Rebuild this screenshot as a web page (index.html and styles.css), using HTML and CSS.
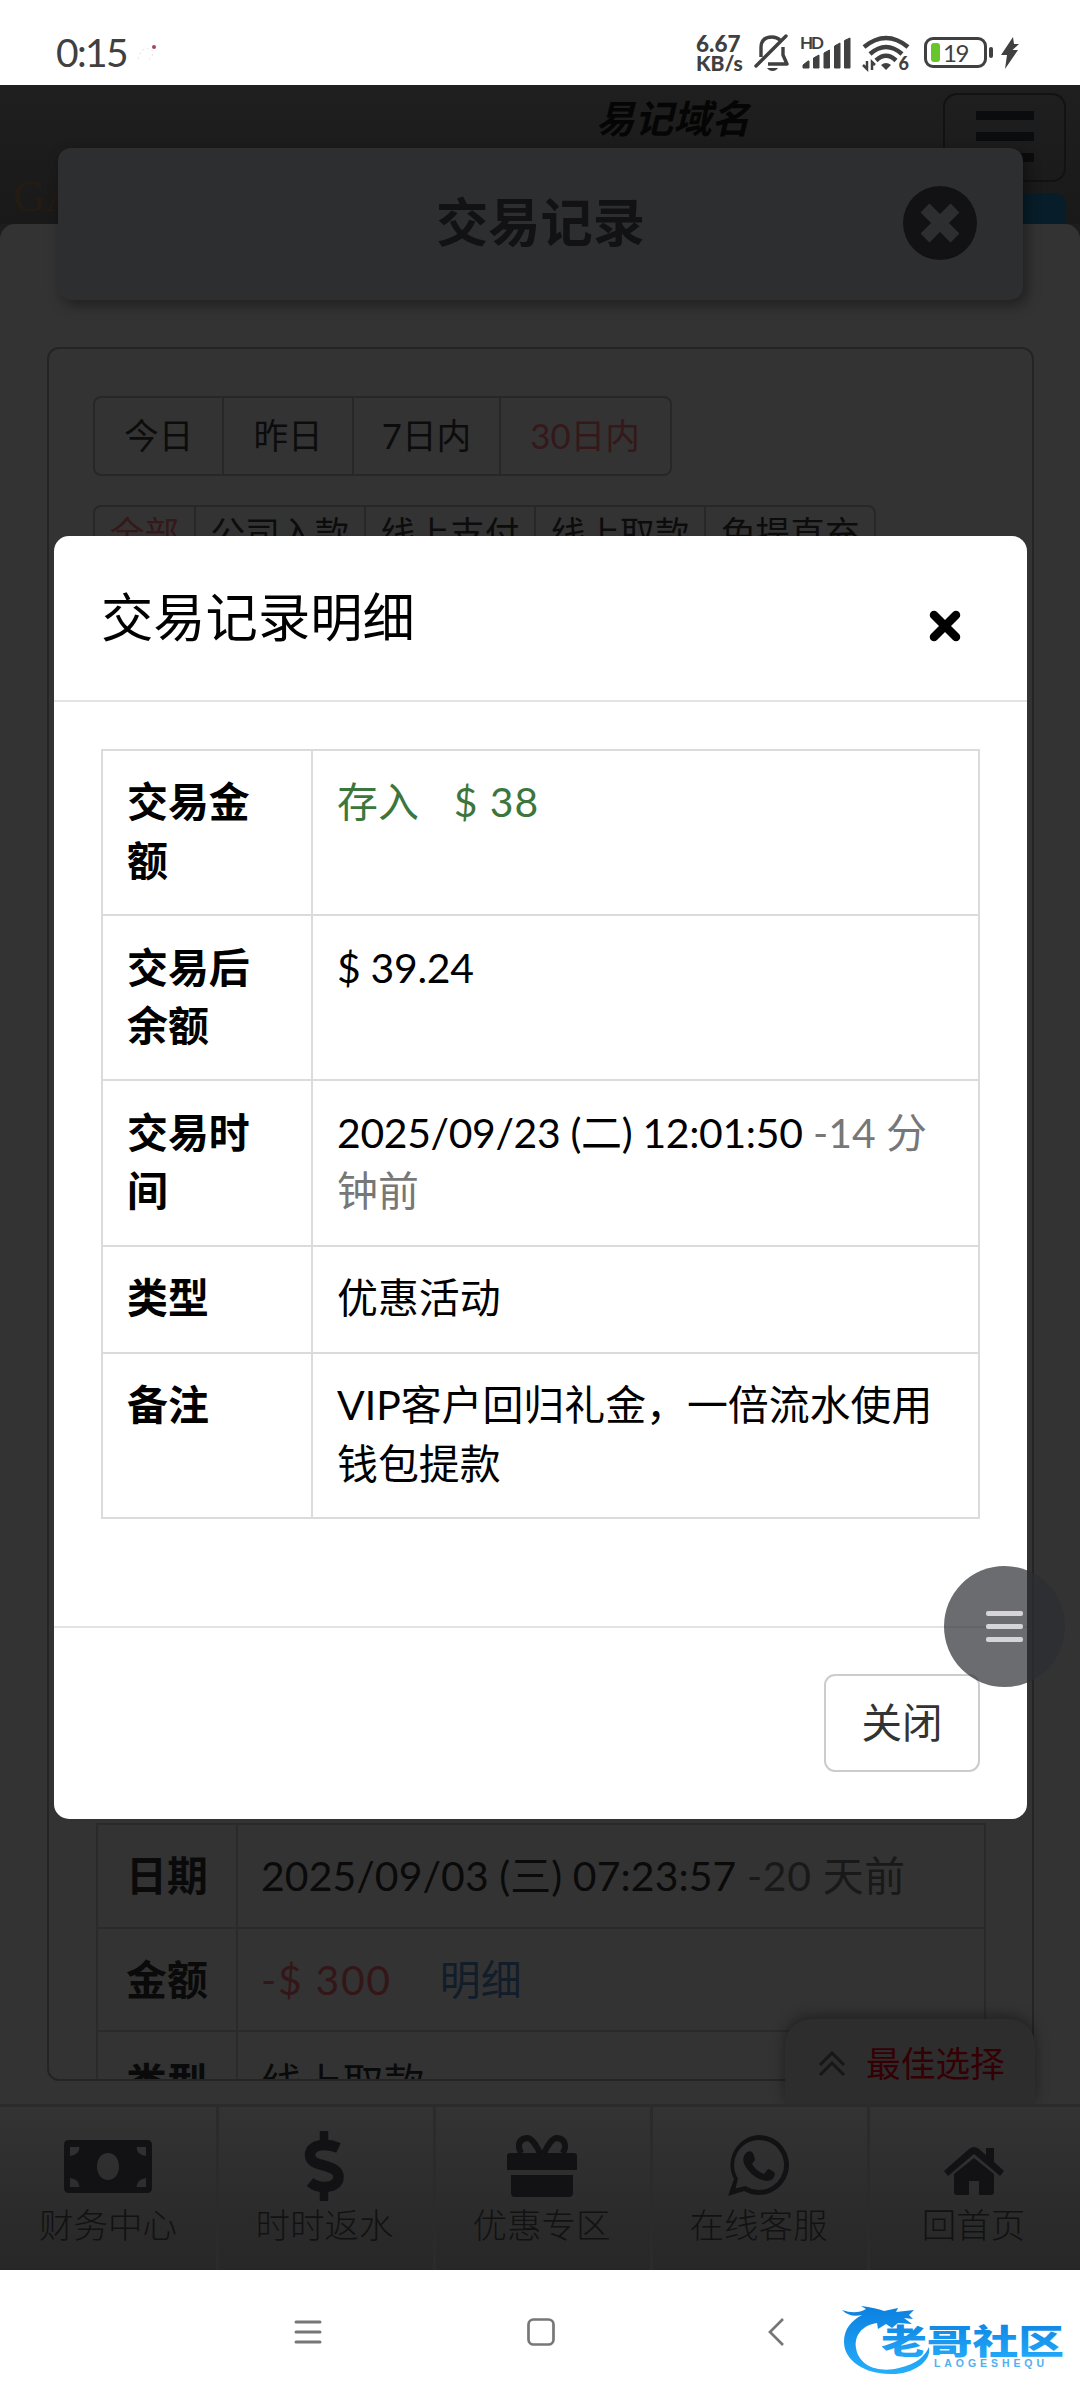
FILE: index.html
```html
<!DOCTYPE html>
<html lang="zh-CN">
<head>
<meta charset="utf-8">
<title>交易记录</title>
<link rel="stylesheet" href="styles.css">
</head>
<body>
<div class="phone">
  <div class="status">
    <span class="clock">0:15</span>
    <svg class="notice" width="26" height="26" viewBox="0 0 26 26"><path d="M2 18l3-8 6-3 6 3-1 6-5 4" fill="none" stroke="#e4e4e4" stroke-width="1" stroke-dasharray="2 3"/><circle cx="18" cy="6" r="2" fill="#a4475a"/></svg>
    <div class="status-right">
      <div class="speed"><b>6.67</b><b class="unit">KB/s</b></div>
      <svg class="bell" width="36" height="40" viewBox="0 0 36 40" fill="none" stroke="#404040" stroke-width="3.4"><path d="M7 24V14.500Q7 4 18 4Q23 4 26 7M29 14V22L33 31H14" stroke-linejoin="round"/><path d="M2 33L32 3" stroke-linecap="round"/><path d="M13 35h11q-2 3-5.500 3T13 35z" fill="#404040" stroke="none"/></svg>
      <svg class="signal" width="54" height="36" viewBox="0 0 54 36" fill="#404040"><text x="1" y="13" font-size="17" font-weight="700" textLength="24">HD</text><path d="M4 32v-3l5-4h1v7zM14.500 32V22l5.500-3v13zM25 32V17l5.500-3v18zM35.500 32V10l5.500-3v25zM45.500 32V4.500l5.500-2.500v30z" stroke="#404040" stroke-width="1" stroke-linejoin="round"/></svg>
      <svg class="wifi" width="48" height="38" viewBox="0 0 48 38" fill="none" stroke="#404040" stroke-width="4.500"><path d="M2 12Q24-6 46 12M8 19Q24 5 40 19M14 25.500Q24 16 34 25.500"/><path d="M19 30q5-4 10 0l-5 5z" fill="#404040" stroke="none"/><path d="M5 26v8l-4-4M10 35v-8l3 3" stroke-width="2.500"/><text x="36.500" y="35" font-size="18" font-weight="900" fill="#404040" stroke="none">6</text></svg>
      <div class="battery"><i class="charge"></i><span>19</span></div>
      <i class="battery-cap"></i>
      <svg class="bolt" width="20" height="32" viewBox="0 0 20 32"><path d="M13 0L1 18h6L5 32 18 13h-5.500L19 7h-5z" fill="#404040"/></svg>
    </div>
  </div>

  <div class="app">
    <header class="site-header">
      <span class="brand">G<small>A</small></span>
      <span class="domain">易记域名</span>
      <div class="menu-btn"><i></i><i></i><i></i></div>
      <div class="blue-tab"></div>
    </header>
    <main class="page">
      <section class="records">
        <div class="filters days"><span>今日</span><span>昨日</span><span>7日内</span><span class="on">30日内</span></div>
        <div class="filters kinds"><span class="on">全部</span><span>公司入款</span><span>线上支付</span><span>线上取款</span><span>免提直充</span></div>
        <table class="list">
          <tr><th>日期</th><td><span class="date">2025/09/03 (三) 07:23:57</span> <span class="ago">-20 天前</span></td></tr>
          <tr><th>金额</th><td><span class="minus">-$ 300</span><span class="link">明细</span></td></tr>
          <tr><th>类型</th><td>线上取款</td></tr>
        </table>
      </section>
    </main>
    <nav class="tabs">
      <a><svg width="88" height="53" viewBox="0 0 88 53"><path fill-rule="evenodd" d="M5 0H83Q88 0 88 5V48Q88 53 83 53H5Q0 53 0 48V5Q0 0 5 0zM44 13C37.500 13 33 18.500 33 26.500S37.500 40 44 40S55 34.500 55 26.500S50.500 13 44 13zM6 7V16Q15 15 15.500 7zM82 7V16Q73 15 72.500 7zM6 47V38Q15 39 15.500 47zM82 47V38Q73 39 72.500 47z"/></svg><span>财务中心</span></a>
      <a><svg width="42" height="72" viewBox="0 0 42 72"><g fill="none" stroke="#121214" stroke-width="10.500"><path d="M34.500 18Q28 15 21 15C11 15 6 19 6 25C6 32 13 33.500 20 35.500C28 38 34.500 40 34.500 47C34.500 54 28 57 20 57Q12 57 6 52"/><path d="M20 1V14M20 58V71" stroke-width="8.500"/></g></svg><span>时时返水</span></a>
      <a><svg width="72" height="62" viewBox="0 0 72 62"><path d="M4 18H68Q71 18 71 21V35H1V21Q1 18 4 18zM5 40H31V62H9Q5 62 5 58zM41 40H67V58Q67 62 63 62H41zM31 40H41V62H31z"/><path d="M34 18C30 10 26 3 21 3Q12 4 13 13L15 18M38 18C42 10 46 3 51 3Q60 4 59 13L57 18" fill="none" stroke="#121214" stroke-width="6"/></svg><span>优惠专区</span></a>
      <a><svg width="62" height="62" viewBox="0 0 62 62"><path fill-rule="evenodd" d="M31 0A30 30 0 1 1 16 56L0 61L6 44A30 30 0 0 1 31 0zM31 5A25 25 0 0 0 10 43.500L7.500 53.500L17.500 51A25 25 0 1 0 31 5z"/><path d="M19 17q4-2 6 1l2 6q0 2-3 5q4 7 12 10l4-5q2 0 7 4q0 7-8 8q-11-1-19-11q-9-11-1-18z"/></svg><span>在线客服</span></a>
      <a><svg width="62" height="50" viewBox="0 0 62 50"><path d="M26 3Q31-1 36 3L43 9V2H51V16L61 25L57 30L31 8L5 30L1 25zM11 28L31 12L51 28V46Q51 49 48 49H36V35H26V49H14Q11 49 11 46z"/></svg><span>回首页</span></a>
    </nav>

    <div class="title-card">
      <h1>交易记录</h1>
      <svg class="close-round" width="74" height="74" viewBox="0 0 74 74"><circle cx="37" cy="37" r="37" fill="#121214"/><path d="M22 22L52 52M52 22L22 52" stroke="#2d2e30" stroke-width="12.500"/></svg>
    </div>
    <div class="best"><svg width="28" height="26" viewBox="0 0 28 26" fill="none" stroke="#171717" stroke-width="3"><path d="M2 14L14 2L26 14M2 24L14 12L26 24"/></svg><span>最佳选择</span></div>

    <div class="overlay">
      <div class="modal">
        <div class="modal-head"><h2>交易记录明细</h2><svg width="34" height="34" viewBox="0 0 34 34"><path d="M6 6L28 28M28 6L6 28" stroke="#000" stroke-width="8.500" stroke-linecap="round"/></svg></div>
        <div class="modal-body">
          <table class="detail">
            <tr><th>交易金额</th><td class="plus">存入<span class="amount">$ 38</span></td></tr>
            <tr><th>交易后余额</th><td><span class="balance">$ 39.24</span></td></tr>
            <tr><th>交易时间</th><td><span class="time">2025/09/23 (二) 12:01:50</span> <span class="ago">-14 分<br>钟前</span></td></tr>
            <tr><th>类型</th><td>优惠活动</td></tr>
            <tr><th>备注</th><td>VIP客户回归礼金，一倍流水使用<br>钱包提款</td></tr>
          </table>
        </div>
        <div class="modal-foot"><button class="close-btn">关闭</button></div>
      </div>
    </div>
    <div class="float-menu"><i></i><i></i><i></i></div>
  </div>

  <div class="sysnav">
    <svg width="28" height="28" viewBox="0 0 28 28" fill="none" stroke="#777" stroke-width="3" stroke-linecap="round"><path d="M2 4H26M2 14H26M2 24H26"/></svg>
    <svg width="28" height="28" viewBox="0 0 28 28" fill="none" stroke="#777" stroke-width="2.700"><rect x="1.500" y="1.500" width="25" height="25" rx="5"/></svg>
    <svg width="28" height="28" viewBox="0 0 28 28" fill="none" stroke="#777" stroke-width="2.700"><path d="M23 1L10 14L23 27"/></svg>
  </div>
  <svg class="watermark" width="226" height="80" viewBox="0 0 226 80">
    <defs><linearGradient id="g" x1="0" y1="0" x2="0" y2="1"><stop offset="0" stop-color="#0b7fe0"/><stop offset="1" stop-color="#26aefb"/></linearGradient></defs>
    <path fill="url(#g)" d="M0 10Q14 15 24 9L19 6Q34 8 42 11L56 8L54 12L72 10L67 15L71 19L62 18L70 24L56 23L50 28L44 24L36 29L35 23C20 25 12 36 14 48C17 67 38 73 57 68C75 64 83 56 87 47C90 63 68 75 48 74C22 74 2 60 2 42C2 29 9 21 20 15Q8 18 0 10z"/>
    <text x="39" y="54" class="wm-cn" textLength="183" lengthAdjust="spacingAndGlyphs">老哥社区</text>
    <text x="92" y="67" class="wm-en" textLength="110">LAOGESHEQU</text>
  </svg>
</div>
</body>
</html>
```

FILE: styles.css
```css
* { box-sizing: border-box; }
body { margin: 0; background: #fff; font-family: Lato, "Noto Sans CJK SC", sans-serif; color: #000; }
h1, h2 { margin: 0; }
i { display: block; }
svg { display: block; flex: none; }
.phone { position: relative; width: 1080px; height: 2400px; overflow: hidden; }

.status { height: 85px; display: flex; align-items: flex-start; padding: 0 60px 0 56px; color: #404040; }
.clock { font-size: 39px; line-height: 48px; margin-top: 28px; width: 80px; white-space: nowrap; letter-spacing: -1.700px; }
.notice { margin-top: 41px; }
.status-right { margin-left: auto; display: flex; align-items: flex-start; }
.speed { display: flex; flex-direction: column; width: 58px; padding-top: 34px; font-size: 22.500px; line-height: 19px; }
.speed b { font-weight: 900; white-space: nowrap; }
.speed .unit { font-size: 21px; }
.bell { margin-top: 33px; }
.signal { margin: 36px 0 0 9px; }
.wifi { margin: 35px 0 0 9px; }
.battery { width: 63px; height: 31px; margin: 37px 0 0 14px; border: 3px solid #404040; border-radius: 9px; display: flex; align-items: center; padding-left: 4px; font-size: 24px; line-height: 24px; letter-spacing: -1.500px; }
.charge { width: 9px; height: 19px; background: #68c62c; border-radius: 3px; margin-right: 3px; }
.battery-cap { width: 4px; height: 11px; border-radius: 2px; background: #404040; margin: 47px 7px 0 2px; }
.bolt { margin-top: 37px; }

.app { position: relative; height: 2185px; overflow: hidden; background: #1d1d1d; display: flex; flex-direction: column; }
.site-header { height: 139px; flex: none; position: relative; background: linear-gradient(#1f1f1f, #191919); }
.brand { position: absolute; left: 13px; top: 85px; font: 45px/52px "Liberation Serif", serif; color: #241b12; }
.brand small { font-size: 34px; }
.domain { position: absolute; left: 596px; top: 5px; font-size: 38.500px; line-height: 56px; font-weight: 700; font-style: italic; color: #050505; }
.menu-btn { position: absolute; left: 943px; top: 8px; width: 123px; height: 89px; border: 2px solid #121212; border-radius: 14px; padding: 16px 0 0 31px; display: grid; gap: 12px; align-content: start; }
.menu-btn i { width: 58px; height: 9px; background: #0b0c0d; }
.blue-tab { position: absolute; right: 14px; top: 108px; width: 60px; height: 40px; border-radius: 0 12px 0 0; background: #071e2a; }
.page { flex: 1; min-height: 0; position: relative; background: #333; border-radius: 15px 15px 0 0; padding: 123px 46px 23px 47px; }
.records { height: 1734px; border: 2px solid #242424; border-radius: 12px; overflow: hidden; padding: 47px 45px 0 44px; }
.filters { display: flex; width: max-content; border: 2px solid #272727; border-radius: 8px; color: #0c0c0c; font-size: 34.700px; }
.filters span { border-left: 2px solid #272727; white-space: nowrap; }
.filters span:first-child { border-left: 0; }
.filters .on { color: #351819; }
.days { height: 80px; line-height: 75px; }
.days span { padding: 0 29px; }
.days span:nth-child(3) { padding: 0 28px; }
.days .on { padding: 0 30px 0 29px; }
.kinds { height: 70px; line-height: 54px; margin-top: 29px; border-radius: 8px 8px 0 0; }
.kinds span { padding: 0 14.700px; }

table { border-collapse: collapse; table-layout: fixed; font-size: 40.900px; line-height: 58.500px; }
th { font-weight: 700; text-align: left; vertical-align: top; }
td { vertical-align: top; white-space: nowrap; }
.list { width: 890px; margin: 1248px 0 0 3px; color: #0a0a0a; }
.list th, .list td { border: 2px solid #2a2a2a; height: 103.500px; padding: 22px 23px 0; }
.list th { width: 140px; padding-left: 28px; }
.list .date { letter-spacing: .100px; }
.list .ago { color: #191919; letter-spacing: .700px; }
.minus { color: #331617; letter-spacing: 1.700px; }
.link { color: #121d2b; margin-left: 48px; }

.tabs { height: 166px; flex: none; position: relative; display: flex; border-top: 3px solid #2b2b2b; background: linear-gradient(#333, #272727); }
.tabs a { flex: 0 0 217px; border-right: 3px solid #2b2b2b; display: flex; flex-direction: column; align-items: center; height: 163px; padding: 24px 3px 0 0; }
.tabs a:first-child { flex-basis: 219px; padding-right: 0; }
.tabs a:last-child { flex: 1; border-right: 0; }
.tabs svg { fill: #121214; margin: 0 auto; }
.tabs a:nth-child(1) svg { margin-top: 9px; margin-bottom: 9px; }
.tabs a:nth-child(2) svg { margin-top: -1px; margin-bottom: 0; }
.tabs a:nth-child(3) svg, .tabs a:nth-child(4) svg { margin-top: 4px; margin-bottom: 5px; }
.tabs a:nth-child(5) svg { margin-top: 15px; margin-bottom: 6px; }
.tabs span { font-size: 34.500px; line-height: 46px; color: #121212; font-weight: 300; white-space: nowrap; }

.title-card { position: absolute; left: 58px; top: 63px; width: 965px; height: 152px; border-radius: 13px; background: #2d2e30; box-shadow: 4px 5px 14px rgba(0,0,0,.4); display: flex; align-items: center; justify-content: center; padding-bottom: 4px; }
.title-card h1 { font-size: 52.300px; line-height: 60px; color: #121214; font-weight: 700; }
.close-round { position: absolute; right: 46px; top: 38px; }
.best { position: absolute; left: 785px; top: 1934px; width: 250px; height: 85px; border-radius: 26px 26px 0 0; background: #2d2d2d; box-shadow: 0 -3px 14px rgba(0,0,0,.4); clip-path: inset(-20px -20px 0 -20px); display: flex; align-items: center; gap: 20px; padding: 0 0 0 33px; font-size: 34.700px; color: #350004; }
.best svg { margin-top: 4px; }

.overlay { position: absolute; inset: 0; display: flex; flex-direction: column; align-items: center; padding: 451px 0 0 1px; }
.modal { width: 973px; height: 1283px; background: #fff; border-radius: 15px; display: flex; flex-direction: column; }
.modal-head { height: 166px; border-bottom: 2px solid #e3e3e3; display: flex; align-items: flex-start; justify-content: space-between; padding: 50px 65px 0 47px; }
.modal-head h2 { font-size: 52.300px; line-height: 62px; font-weight: 400; }
.modal-head svg { margin-top: 23px; }
.modal-body { height: 924px; padding: 47px 47px 0; }
.detail { width: 879px; }
.detail th, .detail td { border: 2px solid #dadcdc; padding: 22.400px 20px 23.800px 24px; height: 107.250px; }
.detail th { width: 210px; padding-right: 30px; }
.detail .time { letter-spacing: -.330px; }
.balance { letter-spacing: -.300px; }
.plus { color: #3c763d; }
.plus .amount { margin-left: 35px; letter-spacing: .900px; }
.ago { color: #777; }
.modal-foot { flex: 1; border-top: 2px solid #e3e3e3; display: flex; justify-content: flex-end; padding: 46px 47px 0; }
.close-btn { width: 156px; height: 98px; background: #fff; border: 2px solid #ccc; border-radius: 11px; font: inherit; font-size: 40.500px; color: #333; padding: 0 0 6px; }
.float-menu { position: absolute; left: 944px; top: 1481px; width: 121px; height: 121px; border-radius: 50%; background: rgba(43,45,50,.7); display: flex; flex-direction: column; justify-content: center; gap: 8px; padding-left: 42px; }
.float-menu i { width: 37px; height: 5px; border-radius: 2px; background: #d5d5d9; }

.sysnav { height: 130px; display: flex; padding: 48px 0 0 294px; gap: 205px; background: #fff; }
.watermark { position: absolute; left: 842px; top: 2300px; }
.wm-cn { font: 900 34px "Noto Sans CJK SC", sans-serif; fill: url(#g); }
.wm-en { font: 700 10.500px "Liberation Sans", sans-serif; fill: #4fb1ee; }
```
